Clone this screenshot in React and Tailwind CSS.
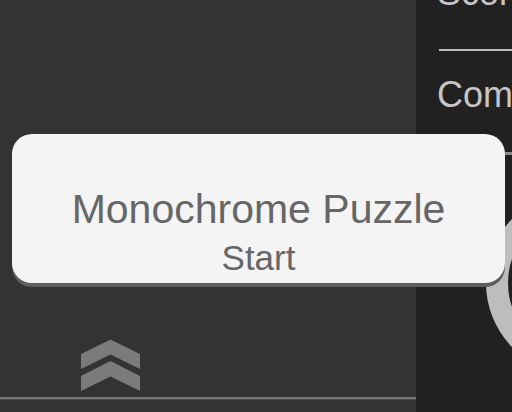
export default function App() {
  const font = { fontFamily: '"Liberation Sans", Arial, sans-serif' };
  return (
    <div className="relative flex w-[512px] h-[412px] overflow-hidden" style={font}>
      {/* left panel */}
      <div className="w-[416px] h-full bg-[#333333] flex flex-col justify-end">
        <svg className="ml-[81px]" width="60" height="53" viewBox="81 340 60 53">
          <polygon points="81,355 110.5,340.5 140,355 140,370 110.5,355.5 81,370" fill="#7b7b7b" />
          <polygon points="81,377 110.5,362 140,377 140,392 110.5,377.5 81,392" fill="#7b7b7b" />
        </svg>
        <div className="mt-[5px] h-[2px] bg-[#747474]" />
        <div className="h-[13px] border-t border-[#4a4a4a]" />
      </div>

      {/* right panel */}
      <div className="flex-1 h-full bg-[#212121] flex flex-col pl-[21px] overflow-hidden">
        <div className="mt-[-27px] text-[36px] leading-[40px] text-[#c6c6c6] whitespace-nowrap">Score</div>
        <div className="mt-[36px] h-[2px] bg-[#bdbdbd] ml-[2px] shrink-0" />
        <div className="mt-[24px] text-[36px] leading-[40px] text-[#c6c6c6] whitespace-nowrap">Completed</div>
        <div className="mt-[37px] h-[3px] bg-[#8a8a8a] shrink-0" />
        <svg className="-ml-[21px] shrink-0" width="96" height="260" viewBox="0 0 96 260" style={{ overflow: 'visible' }}>
          <circle cx="162" cy="128" r="81" fill="none" stroke="#bdbdbd" strokeWidth="22" />
        </svg>
      </div>

      {/* dialog card */}
      <div className="absolute left-[12px] top-[134px] w-[493px] h-[149px] rounded-[20px] bg-[#f4f4f4] shadow-[0_4px_0_#5e5e5e] flex flex-col items-center text-[#666666]">
        <div className="mt-[52px] text-[41px] leading-[46px] whitespace-nowrap">Monochrome Puzzle</div>
        <div className="mt-[6px] text-[35px] leading-[40px]">Start</div>
      </div>
    </div>
  );
}
